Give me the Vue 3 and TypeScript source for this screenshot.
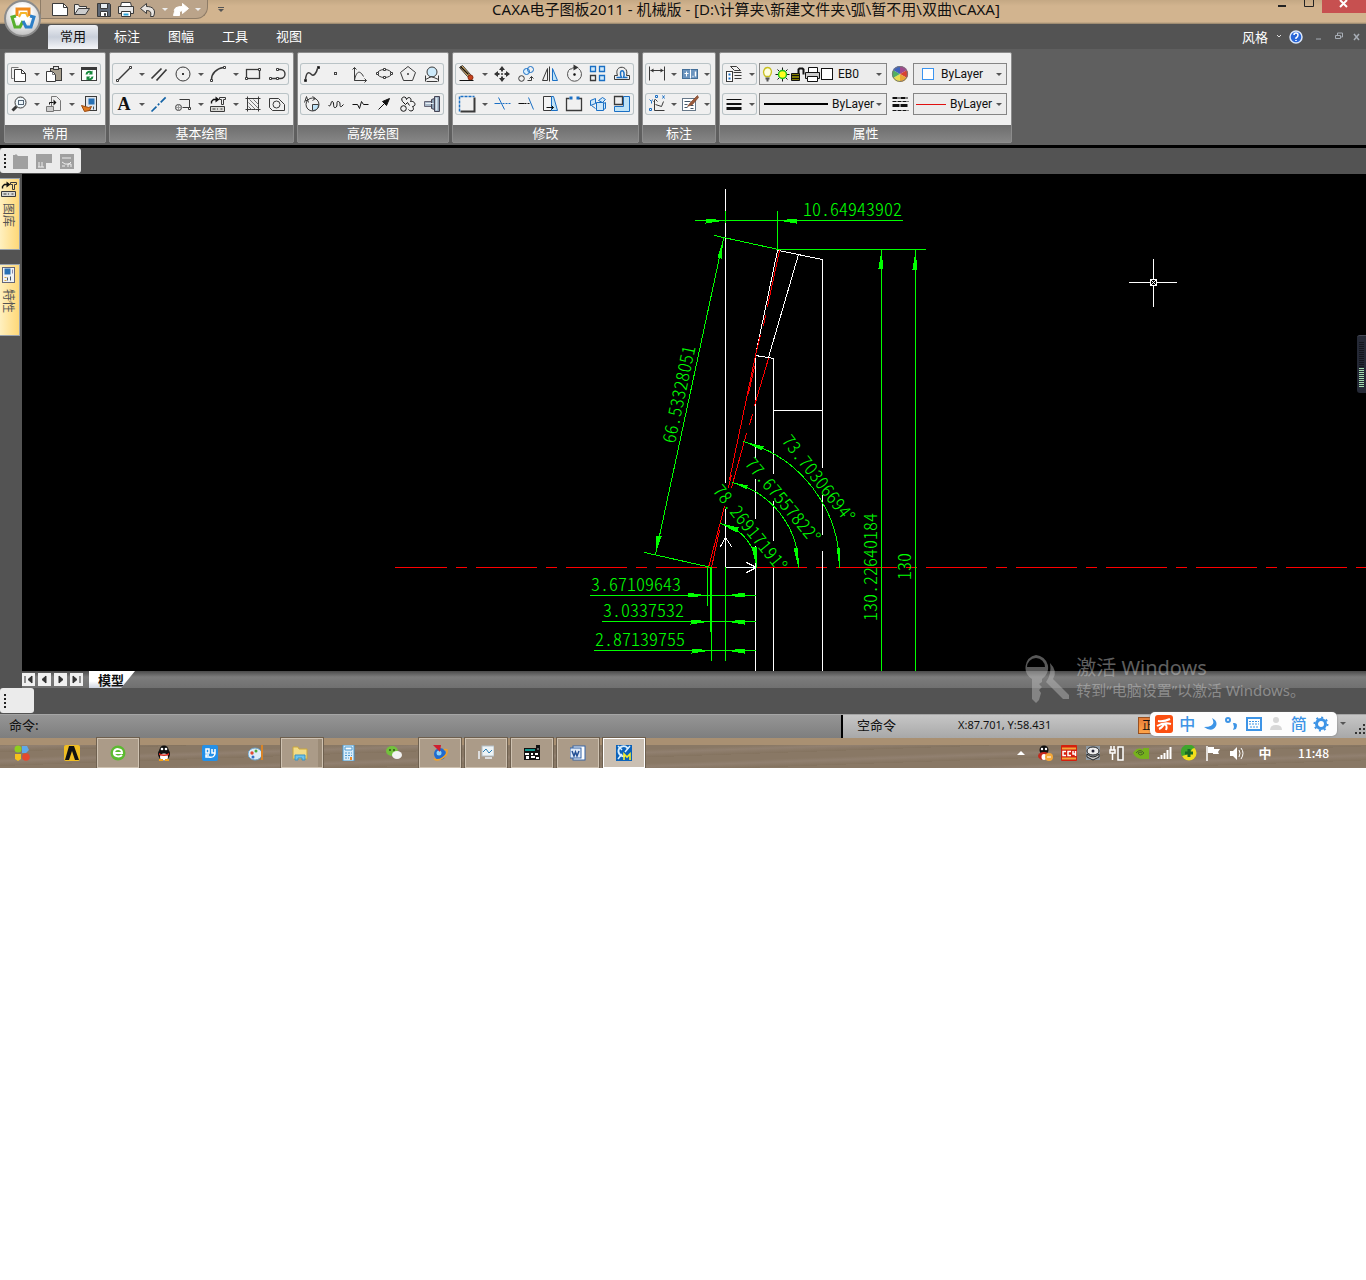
<script setup lang="ts">
import { ref } from 'vue'

interface Tool { icon: string; label: string; menu?: boolean }
interface Panel { title: string; rows: Tool[][]; compact?: boolean }
type Seg = [number, number, number, number]
interface Note { x: number; y: number; turn: number; text: string }

const t = (icon: string, label: string, menu = false): Tool => ({ icon, label, menu })

// Half-pixel origin keeps one-pixel strokes crisp.
const box = '-0.5 -0.5 16 16'

const glyphs: Record<string, string> = {
  copy: '<path d="M0 1h7M0 1v11h2" stroke="#777"/><path d="M3 3h7l4 4v8h-11z" fill="#fff"/><path d="M10 3v4h4"/>',
  paste: '<rect x="4" y="2" width="11" height="12" fill="#a89f8e"/><rect x="7" y="0" width="5" height="3" fill="#ddd"/><path d="M0 5h6l3 3v7h-9z" fill="#fff"/><path d="M6 5v3h3" stroke="#777"/>',
  refresh: '<rect x="0" y="1" width="15" height="13" fill="#fff"/><path d="M0 2h15" stroke-width="3"/><path d="M5 8a3 3 0 0 1 5-2M11 10a3 3 0 0 1-5 2" stroke="#16883c" stroke-width="2"/><path d="M11 4v4h-4zM5 14v-4h4z" fill="#16883c" stroke="none"/>',
  zoom: '<circle cx="9" cy="6" r="5.500" fill="#eef6fa"/><rect x="7" y="4" width="5" height="4" stroke="#567"/><path d="M5 10l-4 4" stroke-width="3"/>',
  move2: '<path d="M5 0h5l4 4v10h-9z" fill="#eee" stroke="#777"/><path d="M0 10h7v5h-7z" fill="#ccc" stroke="#777"/><path d="M3 8v-2h4" stroke="#111"/><path d="M7 3l3 3-3 3z" fill="#111" stroke="none"/>',
  match: '<rect x="4" y="0" width="11" height="14" fill="#dfe6ee"/><rect x="7" y="2" width="6" height="6" fill="#2770b5" stroke="none"/><path d="M12 10v3" stroke="#456"/><path d="M0 9l7 2 3-1-2 4-5 1z" fill="#e07a20" stroke="#9a4a10"/>',
  props: '<rect x="1" y="0" width="12" height="15" fill="#eef2f6" stroke="#667"/><rect x="3" y="1" width="6" height="6" fill="#2770b5" stroke="none"/><path d="M11 2v4" stroke="#88a"/><path d="M3 10h2M3 13h2" stroke="#d6a53a"/><path d="M6 10v3M9 9v4" stroke="#456"/>',
  line: '<path d="M2 13l11-11" stroke-width="1.500"/><path d="M0 13h2v2h-2zM13 0h2v2h-2z" fill="#fff"/>',
  parallel: '<path d="M0 12l10-10M5 14l10-11" stroke-width="1.700"/>',
  circle: '<circle cx="7.500" cy="7.500" r="7"/><rect x="7" y="7" width="1" height="1"/>',
  arc: '<path d="M1 13c0-6 5-11 12-12" stroke-width="1.500"/><path d="M0 13h2v2h-2zM13 0h2v2h-2z" fill="#fff"/>',
  rect: '<rect x="1" y="3" width="13" height="9" stroke-width="1.300"/><path d="M0 11h2v2h-2zM13 2h2v2h-2z" fill="#fff"/>',
  poly: '<path d="M8 3h3a4 4 0 0 1 0 9h-10" stroke-width="1.400"/><path d="M7 2h2v2h-2zM0 11h2v2h-2zM7 11h2v2h-2z" fill="#fff"/>',
  axis: '<path d="M0 15l15-15" stroke="#1463a5" stroke-width="1.700" stroke-dasharray="7 2 2 2"/>',
  tag: '<path d="M4 3h10v8h-7" fill="#ececec"/><circle cx="3" cy="11" r="3"/><path d="M0 11h6M3 8v6" stroke="#999"/><path d="M13 11h2v2h-2z" fill="#fff"/>',
  lib: '<path d="M1 7v-2l2-2h3" stroke="#111" stroke-width="1.400"/><path d="M5 0l4 3-4 3z" fill="#111" stroke="none"/><path d="M9 1h6v2h-2v5h-2v-5h-2z"/><path d="M0 10h14v5h-14z" fill="#d8d8d4"/><path d="M2 12.500h3M10 12.500h2M7 12v1"/>',
  hatch: '<path d="M2 0v15M13 0v15M0 2h15M0 13h15"/><path d="M3 6l7 7M3 10l3 3M4 3l9 9M8 3l5 5" stroke="#777"/>',
  region: '<path d="M0 2h9l6 6v6h-12l-3-3z"/><circle cx="7" cy="8" r="3.500"/>',
  spline: '<path d="M1 13c1-9 4-7 6-5s5-1 6-6" stroke-width="1.500"/><path d="M0 13h2v2h-2zM13 0h2v2h-2z" fill="#111"/>',
  point: '<rect x="6" y="6" width="2" height="2" stroke="#444"/>',
  curve: '<path d="M2 1v13h12M2 14c1-6 4-13 9-4M0 3l2-2 2 2M12 12l2 2-2 2"/>',
  ellipse: '<ellipse cx="8" cy="7" rx="7" ry="4"/><path d="M7 2h2v2h-2zM14 6h2v2h-2zM0 6h2v2h-2zM7 10h2v2h-2z" fill="#fff"/>',
  polygon: '<path d="M7.500 0l7.500 6-3 8h-9l-3-8z"/><path d="M7 7h1v1h-1z"/>',
  locate: '<circle cx="7.500" cy="5.500" r="5" fill="#cdeafa"/><path d="M1 9v6M14 9v6M1 13l6-3 7 3"/><path d="M2 15h11"/>',
  rotdraw: '<circle cx="8" cy="8" r="6.500"/><path d="M8 8h6c0 4-2 6-6 6z" fill="#bfe3f7"/><path d="M0 6l2-6 2 6M1 4h2M8 0l3 2-3 2"/>',
  wave: '<path d="M0 9c3 2 2-5 4-4s0 7 3 6 0-7 3-6 0 6 3 5l2-2" stroke="#111"/>',
  zig: '<path d="M0 8h5l2 4 2-7 2 3h5" stroke="#111"/>',
  arrow: '<path d="M2 13l8-8" stroke="#111"/><path d="M13 2l-3 7-4-4z" fill="#111" stroke="#111"/>',
  cloud: '<path d="M2 5c-3-5 4-6 4-2 2-4 6-1 4 2 5-1 6 5 2 5 3 4-2 6-4 3M2 5l3 3 2-2 2 3" stroke="#111"/><circle cx="3" cy="12" r="2.800" stroke="#111"/>',
  bolt: '<path d="M0 5h7v5h-7z" fill="#a8b8c8" stroke="#667"/><path d="M7 3l3-1v11l-3-1zM10 0h5v15h-5z" fill="#8ca0b4" stroke="#445"/><path d="M12 1v13" stroke="#dde8f2" stroke-width="2"/><path d="M1 7h8" stroke="#e8eef4"/>',
  erase: '<path d="M0 1l8 9 3-2-8-9z" fill="#f0c070"/><path d="M1 0l8 8" stroke="#111" stroke-width="1.500"/><circle cx="11" cy="11" r="2.500" fill="#c7421c" stroke="#8a2a10"/><path d="M0 14h14" stroke="#111"/>',
  move: '<path d="M7.500-.5l3 4h-6zM7.500 15.500l3-4h-6zM-.5 7.500l4-3v6zM15.500 7.500l-4-3v6z" fill="#333" stroke="none"/><path d="M7.500 3v2M7.500 10v2M3 7.500h2M10 7.500h2" stroke-width="2"/><path d="M7 7h1v1h-1z"/>',
  copyobj: '<circle cx="8" cy="5" r="3" fill="#d9efff" stroke="#1a6fc4"/><circle cx="12" cy="3" r="3" stroke="#1a6fc4"/><circle cx="3" cy="12" r="2.800"/><path d="M9 14h4v-4M11 12l2-2 2 2"/>',
  mirror: '<path d="M5 2v12h-5zM7 0v15"/><path d="M10 2v12h5z" fill="#bfe3f7" stroke="#1a6fc4"/>',
  rotate: '<path d="M4 2a7 7 0 1 0 8 0" stroke="#555"/><path d="M4 3a7 7 0 0 1 5-2" stroke="#555"/><path d="M7-2l5 3-5 3z" fill="#333" stroke="none"/><circle cx="8" cy="8" r="1" fill="#111"/>',
  array: '<path d="M0 0h5v5h-5zM9 0h5v5h-5zM9 9h5v5h-5z" fill="#cfe8fa" stroke="#1a6fc4" stroke-width="1.300"/><path d="M0 9h5v5h-5z" stroke-width="1.300"/>',
  offset: '<path d="M0 13v-4h3c-4-11 12-11 9 0h3v4z"/><path d="M2 11h5c-4-9 5-9 2 0h4" stroke="#1a6fc4" stroke-width="1.500"/>',
  stretchbox: '<path d="M1 15h14v-14" stroke-width="2"/><path d="M0 15v-15h15" stroke="#1a6fc4" stroke-width="1.500" stroke-dasharray="3 1"/>',
  trim: '<path d="M0 7h6M4 1l6 12" stroke="#1a6fc4"/><path d="M8 7h8" stroke="#1a6fc4" stroke-dasharray="2 1"/>',
  extend: '<path d="M0 7h6" stroke="#111"/><path d="M6 7h5" stroke="#111" stroke-dasharray="2 1"/><path d="M10 1l5 12" stroke="#1a6fc4"/>',
  stretch: '<path d="M1 0h8v14h-8z" fill="#f4f4f4"/><path d="M9 0l2 0 4 14h-6z" fill="#bfe3f7" stroke="#1a6fc4"/><path d="M4 11h7M9 9l2 2-2 2" stroke="#111"/>',
  brk: '<path d="M3 2h-3v12h15v-12h-3" stroke-width="1.300"/><path d="M3 0h3v3h-3zM10 0h3v3h-3z" fill="#1a6fc4" stroke="none"/>',
  explode: '<path d="M6 6h7v8h-7zM0 4l5-2v5l-5 2zM8 4l4-3 3 2-3 3zM1 9l4 3M13 7l2-1v6l-2 1" fill="#cfe8fa" stroke="#1a6fc4"/>',
  scale: '<path d="M0 15v-5h9v-10h6v15z" fill="#bfe3f7" stroke="#1a6fc4"/><path d="M0 0h8v8h-8z" fill="#eee" stroke-width="1.300"/>',
  dim: '<path d="M0 0v14M15 0v14M1 4h13"/><path d="M1 4l3-2v4zM14 4l-3-2v4z" fill="#333" stroke="none"/>',
  tol: '<rect x="0" y="3" width="15" height="9" fill="#6c95bf" stroke="#446f99"/><path d="M8 3v9M2 7h4M4 5v5" stroke="#fff"/><path d="M10 10h1M13 5v5" stroke="#fff" stroke-width="1.400"/>',
  coord: '<path d="M5 3v11h10M6 8l6 2 2-5M4 5l2-2 2 2"/><path d="M0 3l2 2 1-2M2 5v2M6-1h2v2h-2zM13-1l2 3M15-1l-2 3M0 12h2v2h-2z" stroke="#1a6fc4"/>',
  dimedit: '<rect x="0" y="2" width="13" height="12" fill="#fff" stroke="#678"/><path d="M2 5h6M2 8h3M2 11h3M8 9h3M8 12h3" stroke="#456"/><path d="M15-1l-7 7-3 4 5-2 6-7z" fill="#9b5b3c" stroke="#70351a" stroke-width=".6"/>',
  layer: '<path d="M4 0h6l4 4h-6zM7 6h8M8 9h7M8 12h7"/><rect x="0" y="5" width="6" height="10" fill="#fff"/><path d="M2 8h2M2 12h2" stroke="#1a6fc4" stroke-width="2"/>',
  weight: '<path d="M0 3h15" stroke="#111"/><path d="M0 7.500h15" stroke="#111" stroke-width="2"/><path d="M0 12h15" stroke="#111" stroke-width="3"/>',
  wheel: '<path d="M8 8L8 0A8 8 0 0 1 15 4z" fill="#a0488e"/><path d="M8 8L15 4A8 8 0 0 1 15 12z" fill="#d84232"/><path d="M8 8L15 12A8 8 0 0 1 8 16z" fill="#e9a633"/><path d="M8 8V16A8 8 0 0 1 1 12z" fill="#e6dc50"/><path d="M8 8L1 12A8 8 0 0 1 1 4z" fill="#50b060"/><path d="M8 8L1 4A8 8 0 0 1 8 0z" fill="#3f63bd"/><circle cx="8" cy="8" r="7.500" stroke="#777"/>',
  ltype: '<path d="M0 1.500h16" stroke="#111" stroke-width="2" stroke-dasharray="5 1 1 1"/><path d="M0 5h16M0 14h16" stroke="#111" stroke-dasharray="4 1"/><path d="M0 9h16" stroke="#111" stroke-width="3" stroke-dasharray="7 1"/>',
  bulb: '<path d="M5 9c-4-4-1-9 2-9s6 4 2 9z" fill="#ffffe0" stroke="#c8c020" stroke-width="1.300"/><path d="M5 11h4M6 13h2" stroke="#555" stroke-width="2"/>',
  sun: '<path d="M7 0v14M0 7h14M2 2l10 10M12 2l-10 10" stroke="#111"/><circle cx="7" cy="7" r="4" fill="#ffff20" stroke="#20c020" stroke-width="1.500"/>',
  lock: '<path d="M1 6h8v7h-8z" fill="#807a00" stroke="#111"/><path d="M1 8h8M1 11h8" stroke="#111"/><path d="M8 6v-4l1-1h3l1 1v5" stroke="#111" stroke-width="2"/>',
  print: '<path d="M3 0h9v5h-9z" fill="#fff" stroke="#111"/><path d="M0 5h14v6h-14z" fill="#ccc" stroke="#111"/><path d="M2 9h10v5h-10z" fill="#fff" stroke="#111"/>',
  swatch: '<rect x="1" y="1" width="11" height="11" fill="#fff" stroke="#111"/>',
  newf: '<path d="M0 1h11l4 4v8h-15z" fill="#fff"/><path d="M11 1v4h4"/>',
  open: '<path d="M0 12v-10h4l1 2h7v2" fill="#eee"/><path d="M0 12l4-6h11l-4 6z" fill="#ccc"/>',
  save: '<path d="M1 1h12l1 1v12h-13z" fill="#5d6774"/><path d="M4 1h7v5h-7z" fill="#e7edf2"/><path d="M4 9h7v5h-7z" fill="#fff"/><path d="M8 11h1v2h-1z" fill="#333"/>',
  qprint: '<path d="M3 0h9l1 4h-11z" fill="#fff"/><path d="M0 4h15v7h-15z" fill="#e8e8e8"/><path d="M3 9h9v5h-9z" fill="#fff"/><path d="M5 12h5" stroke="#2aa3d8" stroke-width="2"/>',
  undo: '<path d="M0 6l6-5v3c6 0 10 3 7 10h-3c1-4 0-6-4-6v3z" fill="#e8e4e0"/>',
  redo: '<path d="M15 6l-6-5v3c-6 0-9 2-8 5l-1 4h6v-4l3-1v3z" fill="#fff" stroke="#fff"/>',
}

const panels: Panel[] = [
  { title: '常用', rows: [
    [t('copy', '复制', true), t('paste', '粘贴', true), t('refresh', '刷新')],
    [t('zoom', '缩放', true), t('move2', '平移', true), t('match', '特性匹配')] ] },
  { title: '基本绘图', rows: [
    [t('line', '直线', true), t('parallel', '平行线'), t('circle', '圆', true), t('arc', '圆弧', true), t('rect', '矩形'), t('poly', '多段线')],
    [t('text', '文字', true), t('axis', '中心线'), t('tag', '图块', true), t('lib', '图库', true), t('hatch', '剖面线'), t('region', '填充')] ] },
  { title: '高级绘图', rows: [
    [t('spline', '样条'), t('point', '点'), t('curve', '公式曲线'), t('ellipse', '椭圆'), t('polygon', '正多边形'), t('locate', '局部放大')],
    [t('rotdraw', '圆弧拟合'), t('wave', '波浪线'), t('zig', '双折线'), t('arrow', '箭头'), t('cloud', '云线'), t('bolt', '轴孔')] ] },
  { title: '修改', rows: [
    [t('erase', '删除', true), t('move', '移动'), t('copyobj', '平移复制'), t('mirror', '镜像'), t('rotate', '旋转'), t('array', '阵列'), t('offset', '等距')],
    [t('stretchbox', '过渡', true), t('trim', '裁剪'), t('extend', '延伸'), t('stretch', '拉伸'), t('brk', '打断'), t('explode', '分解'), t('scale', '比例缩放')] ] },
  { title: '标注', compact: true, rows: [
    [t('dim', '尺寸标注', true), t('tol', '公差', true)],
    [t('coord', '坐标标注', true), t('dimedit', '标注编辑', true)] ] },
]

const tabs = ['常用', '标注', '图幅', '工具', '视图']
const active = ref(0)
const command = ref('')
const sheetNav = ['M3 3v7M10 3v7l-4-3.500z', 'M8 3v7l-4-3.500z', 'M5 3v7l4-3.500z', 'M10 3v7M3 3v7l4-3.500z']

const white: Seg[] = [
  [725, 189, 725, 482], [725, 509, 725, 567], [755, 355, 755, 457], [755, 479, 755, 518], [755, 546, 755, 671],
  [773, 358, 773, 473], [773, 501, 773, 540], [773, 568, 773, 671], [822, 259, 822, 467], [822, 495, 822, 534],
  [822, 551, 822, 671], [773, 410, 822, 410], [778, 250, 822, 259], [777, 250, 755, 355], [798, 254, 768, 357],
  [755, 355, 773, 358], [725, 567, 756, 567], [746, 562, 756, 567], [746, 572, 756, 567], [720, 546, 725, 537],
  [731, 546, 725, 537], [1153, 259, 1153, 279], [1153, 285, 1153, 306], [1129, 282, 1150, 282], [1156, 282, 1176, 282],
]
const red: Seg[] = [
  [779, 250, 767, 306], [765, 315, 763, 325], [760, 335, 755, 355], [755, 355, 729, 479], [754, 366, 748, 393],
  [768, 358, 754, 405], [752, 414, 749, 424], [746, 433, 731, 487], [731, 475, 728, 487], [724, 506, 708, 567], [719, 530, 711, 567],
]
const green: Seg[] = [
  [695, 220, 902, 220], [725, 211, 725, 222], [777, 211, 777, 249], [778, 249, 925, 249], [714, 235, 778, 249],
  [723, 238, 655, 554], [644, 552, 711, 567], [881, 249, 881, 671], [915, 249, 915, 671], [590, 595, 755, 595],
  [602, 621, 755, 621], [594, 650, 755, 650], [707, 567, 707, 605], [710, 567, 710, 631], [711, 567, 711, 660], [725, 567, 725, 660],
]
const arrows = [
  'M725 220l-20-2v5z', 'M777 220l19-2v5z', 'M723 238l-2 20-4-1z', 'M655 554l1-19 5 1z', 'M881 250l-3 18h5z', 'M915 250l-3 19h5z',
  'M707 595l-20-3v5z', 'M710 621l-20-2v5z', 'M711 650l-20-2v5z', 'M725 595l19-3v5z', 'M725 621l19-2v5z', 'M725 650l19-2v5z',
  'M720 523l18 4-2 5z', 'M732 482l15 3-1 4z', 'M743 441l20 5-2 4z', 'M756 566l-5-19 5-1z', 'M798 567l-5-19 4-1z', 'M839 567l-3-20h4z',
]
const notes: Note[] = [
  { x: 803, y: 216, turn: 0, text: '10.64943902' },
  { x: 591, y: 591, turn: 0, text: '3.67109643' },
  { x: 603, y: 617, turn: 0, text: '3.0337532' },
  { x: 595, y: 646, turn: 0, text: '2.87139755' },
  { x: 675, y: 444, turn: -78, text: '66.53328051' },
  { x: 877, y: 621, turn: -90, text: '130.22640184' },
  { x: 911, y: 580, turn: -90, text: '130' },
  { x: 781, y: 441, turn: 52, text: '73.70306694°' },
  { x: 744, y: 464, turn: 50, text: '77.67557822°' },
  { x: 712, y: 491, turn: 51, text: '78.26917191°' },
]

interface App { name: string; art: string; open?: boolean; current?: boolean; stacked?: boolean }
const apps: App[] = [
  { name: '开始', art: '<circle cx="4" cy="4" r="3.500" fill="#8fce1e"/><path d="M8 1h5l2 4-3 3h-4z" fill="#5fa9e8"/><path d="M1 9h6v5l-3 2-3-2z" fill="#f6c21c"/><circle cx="12" cy="12" r="3.800" fill="#e4492f"/>' },
  { name: '音乐', art: '<rect width="16" height="16" rx="2" fill="#f0bd22"/><path d="M1 15l4-14h5l5 14h-4l-3-9-3 9z" fill="#111"/>' },
  { name: '浏览器', open: true, art: '<circle cx="8" cy="8" r="7.500" fill="#5cba30"/><path d="M4 8h8c0-5-7-5-8-1s5 6 8 3" fill="none" stroke="#fff" stroke-width="2"/>' },
  { name: 'QQ', art: '<ellipse cx="8" cy="9" rx="6" ry="6.500" fill="#111"/><circle cx="8" cy="5" r="4.500" fill="#111"/><ellipse cx="8" cy="12" rx="4" ry="3.500" fill="#fff"/><circle cx="6" cy="4" r="1.300" fill="#fff"/><circle cx="10" cy="4" r="1.300" fill="#fff"/><path d="M3 8q5 3 10 0v2q-5 2-10 0z" fill="#d82b20"/><path d="M3 15h4M9 15h4" stroke="#f2a21c" stroke-width="2"/>' },
  { name: '管家', art: '<rect width="16" height="16" rx="2" fill="#2490e8"/><rect x="4" y="4" width="3" height="4" fill="none" stroke="#fff" stroke-width="1.500"/><path d="M10 4v4h3v-4M13 8q0 5-6 4h-3v-2h3" fill="none" stroke="#fff" stroke-width="1.500"/>' },
  { name: '画图', art: '<ellipse cx="7" cy="9" rx="7" ry="6" fill="#dcecf7" stroke="#6ca4cc"/><circle cx="4" cy="8" r="1.700" fill="#e34a30"/><circle cx="8" cy="6" r="1.500" fill="#4aa83a"/><circle cx="5" cy="12" r="1.500" fill="#316fc4"/><path d="M14 0v15" stroke="#d88427" stroke-width="2"/>' },
  { name: '资源管理器', open: true, stacked: true, art: '<path d="M1 2h5l1 2h8v10h-14z" fill="#f3dc86" stroke="#c9a63e"/><path d="M3 15v-5h10v5h-3v-2h-4v2z" fill="#6fc4ea" stroke="#3b93c4"/>' },
  { name: '计算器', art: '<rect x="3" width="11" height="16" fill="#d9edfa" stroke="#4b9ad1"/><path d="M5 2h7v3h-7z" fill="#fff" stroke="#4b9ad1"/><path d="M5 8h7M5 10.500h7M5 13h4" stroke="#4b9ad1" stroke-dasharray="2 1"/><path d="M11 12v3" stroke="#e98a2a" stroke-width="2"/>' },
  { name: '微信', art: '<ellipse cx="6" cy="6" rx="6" ry="5" fill="#72c13c"/><ellipse cx="11" cy="10" rx="5" ry="4" fill="#f2f2f2"/><circle cx="4" cy="5" r=".8"/><circle cx="8" cy="5" r=".8"/>' },
  { name: '宽带', open: true, art: '<circle cx="8" cy="9" r="6" fill="#1f6bd0"/><circle cx="7" cy="8" r="2.500" fill="#8fd4f8"/><path d="M2 14c5 3 14-3 13-9q-2-1-3 0" fill="none" stroke="#f2a22a" stroke-width="1.600"/><path d="M1 0h8l-1 7z" fill="#cf1f30"/>' },
  { name: '监视器', open: true, art: '<rect x="4" y="1" width="12" height="10" fill="#eef4f6" stroke="#b4c0c8"/><path d="M5 7l3-3 3 4 3-3" fill="none" stroke="#2b7fb4"/><path d="M7 13h7M1 6v8" stroke="#ddd" stroke-width="2"/>' },
  { name: '工程', open: true, art: '<path d="M0 3h16v12h-16z" fill="#111"/><path d="M1 4h10v2h-10z" fill="#12958c"/><path d="M1 8h4v2h-4zM7 8h2v2h-2zM11 8h3v2h-3zM2 11h3v3h-3zM7 11h4v2h-4zM12 12h3v2h-3z" fill="#fff"/><path d="M12 0h4v3h-4z" fill="#111"/><path d="M13 4h2" stroke="#bbb"/>' },
  { name: 'Word', open: true, art: '<rect x="3" y="1" width="12" height="14" fill="#fff" stroke="#3465a8"/><rect x="0" y="3" width="11" height="10" fill="#dfe9f7" stroke="#3465a8"/><path d="M2 6l2 5 1.500-4 1.500 4 2-5" fill="none" stroke="#234f94" stroke-width="1.500"/>' },
  { name: 'CAXA', open: true, current: true, art: '<rect width="16" height="16" fill="#0a62ba"/><path d="M12 4a5 5 0 1 0-3 7" fill="none" stroke="#d8efff" stroke-width="2"/><path d="M2 14l4-5M14 1l-5 6M2 1l4 4" fill="none" stroke="#d8efff" stroke-width="1.500"/><path d="M8 15v-6l3 3 3-3v6" fill="none" stroke="#f4ee2a" stroke-width="1.600"/>' },
]
const tray: { name: string; art: string }[] = [
  { name: '显示隐藏的图标', art: '<path d="M4 10l4-4 4 4z" fill="#fff"/>' },
  { name: 'QQ', art: '<circle cx="7" cy="5" r="4.500" fill="#111"/><ellipse cx="7" cy="11" rx="6" ry="4" fill="#c4281c"/><ellipse cx="7" cy="12" rx="2.500" ry="3" fill="#fff"/><circle cx="5" cy="4" r="1.200" fill="#fff"/><circle cx="9" cy="4" r="1.200" fill="#fff"/><circle cx="12" cy="12" r="4" fill="#f4a83a"/><path d="M10 12h4" stroke="#fff"/>' },
  { name: 'CCM', art: '<rect width="16" height="16" rx="1" fill="#d4200f"/><path d="M1 3.500h14M1 13.500h14" stroke="#f2a43a" stroke-width="2"/><path d="M5 6.500h-3v4h3M10 6.500h-3v4h3M12 6v3h3M14.500 6v5" fill="none" stroke="#fff" stroke-width="1.500"/>' },
  { name: '硬盘', art: '<rect x="1" y="1" width="14" height="14" fill="#8f98a0"/><ellipse cx="8" cy="6" rx="6" ry="4" fill="#eee" stroke="#222"/><path d="M2 9q6 6 12 0v3l-6 3-6-3z" fill="#ccc" stroke="#222"/><circle cx="8" cy="6" r="1.500" fill="#223"/>' },
  { name: '电源', art: '<path d="M2 1v4M5 1v4M1 5h5v3h-5zM3.500 8v7" fill="none" stroke="#fff" stroke-width="1.500"/><path d="M9 2h5v13h-5z" fill="#6d6256" stroke="#fff" stroke-width="1.500"/>' },
  { name: '显卡', art: '<path d="M0 8q5-7 10-3v-2h6v11h-6q-7 0-10-6z" fill="#76b21c"/><path d="M3 8q4-5 8 0-4 4-6 0 2-2 4 0" fill="none" stroke="#48632a"/>' },
  { name: '网络', art: '<path d="M1.500 12v2M4.500 10v4M7.500 8v6M10.500 5v9M13.500 2v12" stroke="#fff" stroke-width="2"/>' },
  { name: '安全卫士', art: '<circle cx="8" cy="8" r="7.500" fill="#f2df1c"/><path d="M1 11a7.500 7.500 0 0 1 13-8q-3 0-4 3t-9 5z" fill="#3fa62c"/><path d="M8 4v8M4 8h8" stroke="#186a24" stroke-width="3"/>' },
  { name: '操作中心', art: '<path d="M2 1v15" stroke="#fff" stroke-width="1.500"/><path d="M3 2h6v2h6l-2 3 1 2h-6v-1h-5z" fill="#fff"/>' },
  { name: '音量', art: '<path d="M1 6h3l4-4v13l-4-4h-3z" fill="#fff"/><path d="M10 5q2 3 0 7M12 3q4 5 0 11" fill="none" stroke="#fff"/>' },
]
</script>

<template>
  <div class="app">
    <header class="titlebar">
      <nav class="quick" aria-label="快速访问">
        <button v-for="q in ['newf', 'open', 'save', 'qprint', 'undo']" :key="q" :aria-label="q"><svg class="ic" :viewBox="box" v-html="glyphs[q]" /></button>
        <i class="caret pale" />
        <button aria-label="redo"><svg class="ic" :viewBox="box" v-html="glyphs.redo" /></button>
        <i class="caret pale" />
      </nav>
      <i class="quickmore"><i class="caret" /></i>
      <h1>CAXA电子图板2011 - 机械版 - [D:\计算夹\新建文件夹\弧\暂不用\双曲\CAXA]</h1>
      <div class="winctl">
        <button aria-label="最小化"><svg width="10" height="10"><path d="M1 6h8" stroke="#222" stroke-width="2" /></svg></button>
        <button aria-label="最大化"><svg width="10" height="10"><path d="M.5 0v6.500h9v-6.500" stroke="#222" fill="none" /></svg></button>
        <button class="close" aria-label="关闭"><svg width="10" height="10"><path d="M1 0l7 7M8 0l-7 7" stroke="#fff" stroke-width="2" /></svg></button>
      </div>
      <button class="orb" aria-label="菜单">
        <svg width="26" height="26" viewBox="0 0 26 26" fill="none" stroke-width="3">
          <path d="M7 10v-7h12v7" stroke="#f08a1c" /><path d="M9 11l2-4h5l2 4" stroke="#f5b52a" stroke-width="2" />
          <path d="M6 10l-4 1 3 10h5l3-6" stroke="#58b030" /><path d="M20 10l4 1-3 10h-5l-3-6" stroke="#2c7fc8" />
        </svg>
      </button>
    </header>

    <nav class="tabs">
      <button v-for="(name, i) in tabs" :key="name" :class="{ on: active === i }" @click="active = i">{{ name }}</button>
      <div class="tabtools">
        <button>风格</button>
        <svg width="98" height="16" viewBox="0 0 98 16" fill="none" aria-hidden="true">
          <path d="M9 6l2 2 2-2" stroke="#ddd" /><circle cx="28" cy="8" r="6" fill="#2a67d8" stroke="#dbe7fb" stroke-width="1.500" />
          <path d="M26 6q0-2 2-2t2 2-2 3v1M28 11v1" stroke="#fff" stroke-width="1.500" />
          <path d="M48 10h5M67.500 6.500h5v3h-5zM69.500 6v-2h5v4h-2" stroke="#a7adb5" /><path d="M86 5l5 6M91 5l-5 6" stroke="#a7adb5" stroke-width="1.500" />
        </svg>
      </div>
    </nav>

    <section class="ribbon">
      <div v-for="p in panels" :key="p.title" class="panel" :class="{ compact: p.compact }">
        <div class="body">
          <div v-for="(row, r) in p.rows" :key="r" class="group">
            <template v-for="tool in row" :key="tool.icon">
              <button class="tool" :aria-label="tool.label">
                <b v-if="tool.icon === 'text'" class="letter">A</b>
                <svg v-else class="ic" :viewBox="box" v-html="glyphs[tool.icon]" />
              </button>
              <button v-if="tool.menu" class="drop" :aria-label="tool.label + '菜单'"><i class="caret" /></button>
            </template>
          </div>
        </div>
        <h2>{{ p.title }}</h2>
      </div>
      <div class="panel">
        <div class="body">
          <div class="proprow">
            <div class="group"><button class="tool" aria-label="图层"><svg class="ic" :viewBox="box" v-html="glyphs.layer" /></button><button class="drop" aria-label="图层菜单"><i class="caret" /></button></div>
            <div class="combo wide">
              <svg v-for="g in ['bulb', 'sun', 'lock', 'print', 'swatch']" :key="g" class="ic state" viewBox="-0.5 -0.5 15 15" v-html="glyphs[g]" />
              <select aria-label="当前图层"><option>EB0</option></select><i class="caret" />
            </div>
            <button class="tool mid" aria-label="颜色"><svg class="ic nostroke" viewBox="0 0 16 16" v-html="glyphs.wheel" /></button>
            <div class="combo"><span class="chip" /><select aria-label="当前颜色"><option>ByLayer</option></select><i class="caret" /></div>
          </div>
          <div class="proprow">
            <div class="group"><button class="tool" aria-label="线宽"><svg class="ic" :viewBox="box" v-html="glyphs.weight" /></button><button class="drop" aria-label="线宽菜单"><i class="caret" /></button></div>
            <div class="combo wide"><span class="rule thick" /><select aria-label="当前线宽"><option>ByLayer</option></select><i class="caret" /></div>
            <button class="tool mid" aria-label="线型"><svg class="ic" :viewBox="box" v-html="glyphs.ltype" /></button>
            <div class="combo"><span class="rule" /><select aria-label="当前线型"><option>ByLayer</option></select><i class="caret" /></div>
          </div>
        </div>
        <h2>属性</h2>
      </div>
    </section>

    <div class="dock">
      <div class="floatbar">
        <i class="grip" />
        <svg width="64" height="16" viewBox="0 0 64 16" fill="#a0a0a0" aria-hidden="true">
          <path d="M0 2h2l1-1 2 2h10v13h-15zM23 1h16v9h-6v6h-10zM47 1h14v15h-14z" />
          <path d="M26 9v5M29 9v5M25 14h6M49 5h9M49 9l3 2h4l2-2M49 13h3M55 14v-3h3v3" stroke="#eee" fill="none" />
        </svg>
      </div>
    </div>

    <div class="work">
      <aside class="side">
        <button><svg class="ic" :viewBox="box" v-html="glyphs.lib" /><span>图库</span></button>
        <button><svg class="ic" :viewBox="box" v-html="glyphs.props" /><span>特性</span></button>
      </aside>
      <main>
        <svg class="canvas">
          <g transform="translate(-22 -174)" shape-rendering="crispEdges" fill="none">
            <path class="r" d="M395 567.500H4000" stroke-dasharray="61 9 11 9" stroke-dashoffset="9" />
            <g class="ink" transform="translate(.5 .5)">
              <line v-for="(s, i) in white" :key="'w' + i" class="w" :x1="s[0]" :y1="s[1]" :x2="s[2]" :y2="s[3]" />
              <rect class="w" x="1150" y="279" width="6" height="6" /><path class="w" d="M1151 280l4 4M1155 280l-4 4" />
              <line v-for="(s, i) in red" :key="'r' + i" class="r" :x1="s[0]" :y1="s[1]" :x2="s[2]" :y2="s[3]" />
              <line v-for="(s, i) in green" :key="'g' + i" class="g" :x1="s[0]" :y1="s[1]" :x2="s[2]" :y2="s[3]" />
              <path class="g" d="M720 523A45 45 0 0 1 756 567M732 482A87 87 0 0 1 798 567M743 441A130 130 0 0 1 839 567" />
              <path v-for="a in arrows" :key="a" :d="a" fill="#0f0" />
            </g>
            <text v-for="n in notes" :key="n.text" :transform="`translate(${n.x} ${n.y}) rotate(${n.turn})`">{{ n.text }}</text>
          </g>
        </svg>
        <div class="sheets">
          <button v-for="d in sheetNav" :key="d" class="nav" aria-label="翻页"><svg width="13" height="13"><path :d="d" fill="#333" stroke="#333" /></svg></button>
          <button class="sheet">模型</button>
        </div>
      </main>
      <div class="meter"><i v-for="n in 23" :key="n" :class="{ lit: n > 13 }" /></div>
    </div>

    <div class="dock low"><div class="floatbar short"><i class="grip" /></div></div>

    <footer class="status">
      <div class="cmd"><label for="cmd">命令:</label><input id="cmd" v-model="command" autocomplete="off"></div>
      <div class="info"><span class="mode">空命令</span><output>X:87.701, Y:58.431</output><button class="ortho">正</button>
        <svg class="resize" width="28" height="20"><path d="M2 7h6l-3 3z" fill="#555" /><path d="M25 10h3M21 14h3M25 14h3M17 18h3M21 18h3M25 18h3" stroke="#333" stroke-width="2" stroke-dasharray="2 2" /></svg>
      </div>
    </footer>

    <div class="taskbar">
      <button v-for="a in apps" :key="a.name" :aria-label="a.name" :class="{ open: a.open, current: a.current, stacked: a.stacked }"><svg width="16" height="16" v-html="a.art" /></button>
      <div class="tray">
        <button v-for="a in tray" :key="a.name" :aria-label="a.name"><svg width="16" height="16" v-html="a.art" /></button>
        <span class="lang">中</span><time>11:48</time>
      </div>
    </div>

    <div class="watermark">
      <svg width="48" height="50" viewBox="0 0 48 50" fill="#c0c0c0">
        <path fill-rule="evenodd" d="M13 0a13 13 0 0 1 6 24v3l-3 2 3 3-3 3 2 3-2 7-3 3-4-4V24A13 13 0 0 1 13 0zM4 12h18a9 9 0 0 0-18 0z" />
        <path d="M27 8q8 8 3 16l16 16v4h-6l-17-17q6-8 4-19z" />
      </svg>
      <div><p class="big">激活 Windows</p><p>转到“电脑设置”以激活 Windows。</p></div>
    </div>

    <div class="ime">
      <svg width="18" height="18"><rect width="18" height="18" rx="3" fill="#fb5012" /><path d="M3 6q6 1 12-2M2 11q7-4 14-2M9 9q-2 4-5 5M9 9q4 1 2 6" fill="none" stroke="#fff" stroke-width="2" /></svg>
      <span>中</span>
      <svg width="16" height="16"><path d="M10 2q5 9-8 9q8 6 12-1q2-5-4-8z" fill="#3d94e6" /></svg>
      <svg width="16" height="16"><circle cx="4" cy="4" r="2" fill="none" stroke="#3d94e6" stroke-width="2" /><path d="M9 7q6-1 3 6l-3 1 1-3z" fill="#3d94e6" /></svg>
      <svg width="16" height="16"><rect x="1" y="2" width="14" height="12" fill="none" stroke="#3d94e6" stroke-width="2" /><path d="M3 5.500h10M3 8h10M4 11h8" stroke="#3d94e6" stroke-dasharray="2 1" /></svg>
      <svg width="16" height="16" fill="#d8d8d8"><circle cx="8" cy="4" r="3" /><path d="M2 14q0-5 6-5t6 5z" /></svg>
      <span>简</span>
      <svg width="16" height="16"><circle cx="8" cy="8" r="4.500" fill="none" stroke="#3d94e6" stroke-width="3" /><circle cx="8" cy="8" r="6.500" fill="none" stroke="#3d94e6" stroke-width="2" stroke-dasharray="2 3" /></svg>
    </div>
  </div>
</template>

<style>
body { margin: 0; background: #fff; }
</style>

<style scoped>
.app { position: relative; overflow: hidden; font: 13px/16px "Noto Sans CJK SC", "Noto Sans", sans-serif; color: #111; }
.app * { box-sizing: border-box; }
button { padding: 0; border: 0; background: none; font: inherit; color: inherit; display: flex; align-items: center; justify-content: center; }
h1, h2, p { margin: 0; font-weight: 400; }
.ic { width: 16px; height: 16px; fill: none; stroke: #3a3a3a; stroke-width: 1; overflow: visible; flex: none; }
.nostroke { stroke: none; }
.caret { width: 0; height: 0; border: 3px solid transparent; border-top-color: #555; border-bottom: 0; flex: none; }
.pale { border-top-color: #eee; margin: 0 2px 0 3px; }

.titlebar { position: relative; z-index: 2; display: flex; height: 24px; background: linear-gradient(#c4a884, #d2b48f 6px, #d2b48f 22px, #8f8069); }
.quick { display: flex; align-items: center; height: 19px; margin-left: 40px; padding: 1px 4px 0 8px; border: 1px solid #8e7c67; border-top: 0; border-radius: 0 0 12px 0; background: #bba48a; }
.quick button { width: 22px; height: 18px; }
.quickmore { display: flex; align-items: flex-end; width: 6px; height: 5px; margin: 7px 0 0 10px; border-top: 1px solid #555; }
.titlebar h1 { flex: 1; text-align: center; font: 15px/19px "Noto Sans", "Noto Sans CJK SC", sans-serif; }
.winctl { display: flex; align-items: flex-start; }
.winctl button { width: 27px; height: 13px; align-items: flex-start; }
.winctl .close { width: 44px; background: #c75050; }
.orb { position: absolute; left: 4px; top: 0; width: 37px; height: 37px; border: 2px solid #8c8c8c; border-radius: 50%; background: radial-gradient(circle at 50% 35%, #fff 30%, #c8c8c8 75%, #777); }

.tabs { display: flex; gap: 4px; height: 25px; padding: 1px 0 0 48px; background: #535353; color: #fff; }
.tabs > button { width: 50px; height: 24px; padding-bottom: 2px; border-radius: 3px 3px 0 0; }
.tabs .on { background: linear-gradient(#eef0f4, #c9cfda 50%, #f6f7f9); color: #111; }
.tabtools { display: flex; align-items: center; margin-left: auto; padding-bottom: 1px; }

.ribbon { display: flex; gap: 3px; height: 99px; padding: 3px 4px 5px; border-bottom: 3px solid #000; background: #5f5f5f; }
.panel { display: flex; flex-direction: column; flex: none; height: 91px; border: 1px solid #8c8c8c; border-radius: 2px; background: #f0f0f0; }
.panel .body { display: flex; flex-direction: column; gap: 8px; height: 72px; padding: 10px 4px 0 2px; }
.panel h2 { flex: 1; font-size: 13px; line-height: 15px; text-align: center; color: #fff; background: linear-gradient(#6d6d6d, #868686); }
.group { display: flex; height: 22px; border-radius: 3px; box-shadow: inset 0 0 0 1px #b9c3c6; }
.tool { width: 24px; height: 22px; }
.drop { width: 11px; height: 22px; }
.compact .drop { width: 9px; }
.letter { font: bold 18px/20px "Liberation Serif", serif; }
.proprow { display: flex; height: 22px; }
.combo { display: flex; align-items: center; width: 94px; height: 22px; padding-right: 4px; border: 1px solid #858585; background: #ececec; }
.combo.wide { width: 128px; margin-left: 2px; }
.combo .state { width: 15px; height: 15px; }
.combo select { flex: 1; min-width: 0; height: 20px; padding: 0 0 0 3px; border: 0; appearance: none; background: none; font: 12px/20px Roboto, "Noto Sans CJK SC", sans-serif; color: #111; }
.mid { width: 26px; }
.chip { width: 12px; height: 12px; margin: 0 4px 0 8px; border: 1px solid #3b94f0; background: #fff; flex: none; }
.rule { width: 30px; height: 1px; margin: 0 1px 0 2px; background: #e01010; flex: none; }
.rule.thick { width: 64px; height: 2px; margin-left: 4px; background: #000; }

.dock { height: 26px; background: #535353; }
.floatbar { display: flex; align-items: center; gap: 7px; width: 81px; height: 25px; padding-left: 4px; border-radius: 3px; background: #ebebeb; }
.floatbar.short { width: 34px; }
.grip { width: 2px; height: 14px; background: repeating-linear-gradient(#222 0 2px, transparent 2px 4px); }

.work { position: relative; display: flex; background: #535353; }
.side { width: 22px; padding-top: 4px; }
.side button { flex-direction: column; justify-content: flex-start; gap: 6px; width: 20px; height: 72px; margin-bottom: 14px; padding: 2px 1px 0 0; border: 1px solid #9aa3ad; border-left: 0; background: linear-gradient(90deg, #fff0bf, #ffd877); }
.side span { writing-mode: vertical-rl; text-orientation: sideways; font-size: 12px; line-height: 18px; color: #555; }
main { flex: 1; min-width: 0; }
.canvas { display: block; width: 100%; height: 497px; background: #000; }
.ink { stroke-linecap: square; }
.canvas .w { stroke: #fff; }
.canvas .r { stroke: #f00; }
.canvas .g { stroke: #0f0; }
.canvas text { fill: #0f0; font: 300 18px "Noto Sans CJK SC", sans-serif; font-feature-settings: "hwid"; }
.sheets { display: flex; align-items: center; gap: 3px; height: 17px; background: linear-gradient(#4a4a4a, #7c7c7c 6px, #707070); }
.nav { width: 13px; height: 13px; background: #f0f0f0; }
.sheet { width: 46px; height: 17px; margin-left: 3px; padding: 0 2px 0 0; background: linear-gradient(#fff 60%, #cdd3df); font-weight: 700; clip-path: polygon(0 0, 100% 0, 70% 100%, 0 100%); }
.meter { position: absolute; right: 0; top: 161px; display: flex; flex-direction: column; gap: 1px; width: 9px; height: 58px; padding: 6px 2px 0; border-radius: 3px 0 0 3px; border-top: 1px solid #454955; background: #252936; }
.meter i { height: 1px; background: #14161d; }
.meter .lit { background: #a4dcb0; }

.status { display: flex; height: 24px; border-top: 1px solid #a5a5a5; background: #555; font-size: 13px; }
.cmd { display: flex; align-items: center; flex: 1; padding: 0 0 3px 9px; border-right: 2px solid #000; background: linear-gradient(#959595, #7e7e7e); }
.cmd input { flex: 1; min-width: 0; height: 18px; border: 0; background: none; outline: 0; font: inherit; }
.info { display: flex; align-items: center; width: 523px; padding: 0 0 3px 14px; background: linear-gradient(#c6c6c6, #a8a8a8); }
.mode { width: 101px; }
.info output { flex: 1; font: 11px/16px "Noto Sans", sans-serif; }
.ortho { width: 20px; height: 17px; border: 1px solid #985020; background: linear-gradient(#e47c38, #ffa448); font-size: 12px; }
.resize { margin-left: 180px; }

.taskbar { display: flex; gap: 4px; height: 30px; padding-left: 5px; background: linear-gradient(#a99072 0 7px, transparent 7px), repeating-linear-gradient(178deg, #897865 0 6px, #918070 9px, #84735f 14px); }
.taskbar > button { width: 42px; height: 30px; }
.taskbar > button:first-child { padding-right: 8px; }
.taskbar .open { border: 1px solid #cfc2b1; outline: 1px solid #6e604f; background: #ab9b88; }
.taskbar .current { border-color: #fff; background: #cabfb2; }
.taskbar .stacked { padding-right: 5px; box-shadow: inset -4px 0 0 #9b8b77; }
.tray { display: flex; align-items: center; margin-left: auto; padding-right: 37px; color: #fff; font-size: 13px; }
.tray button { width: 24px; height: 30px; }
.lang { width: 32px; text-align: center; font-weight: 700; }
.tray time { margin-left: 17px; font-size: 12px; font-weight: 500; }

.watermark { position: absolute; right: 61px; bottom: 63px; display: flex; gap: 5px; opacity: .45; color: #d0d0d0; pointer-events: none; font: 15px/20px "Noto Sans", "Noto Sans CJK SC", sans-serif; }
.watermark div { padding-top: 1px; }
.watermark .big { font-size: 20px; line-height: 24px; }
.ime { position: absolute; right: 29px; bottom: 32px; display: flex; align-items: center; justify-content: space-between; width: 187px; height: 24px; padding: 0 8px 0 5px; border-radius: 5px; background: #fdfdfd; color: #3d94e6; font-size: 16px; font-weight: 500; box-shadow: 0 0 2px #777; }
.ime span { padding-bottom: 2px; }
</style>
